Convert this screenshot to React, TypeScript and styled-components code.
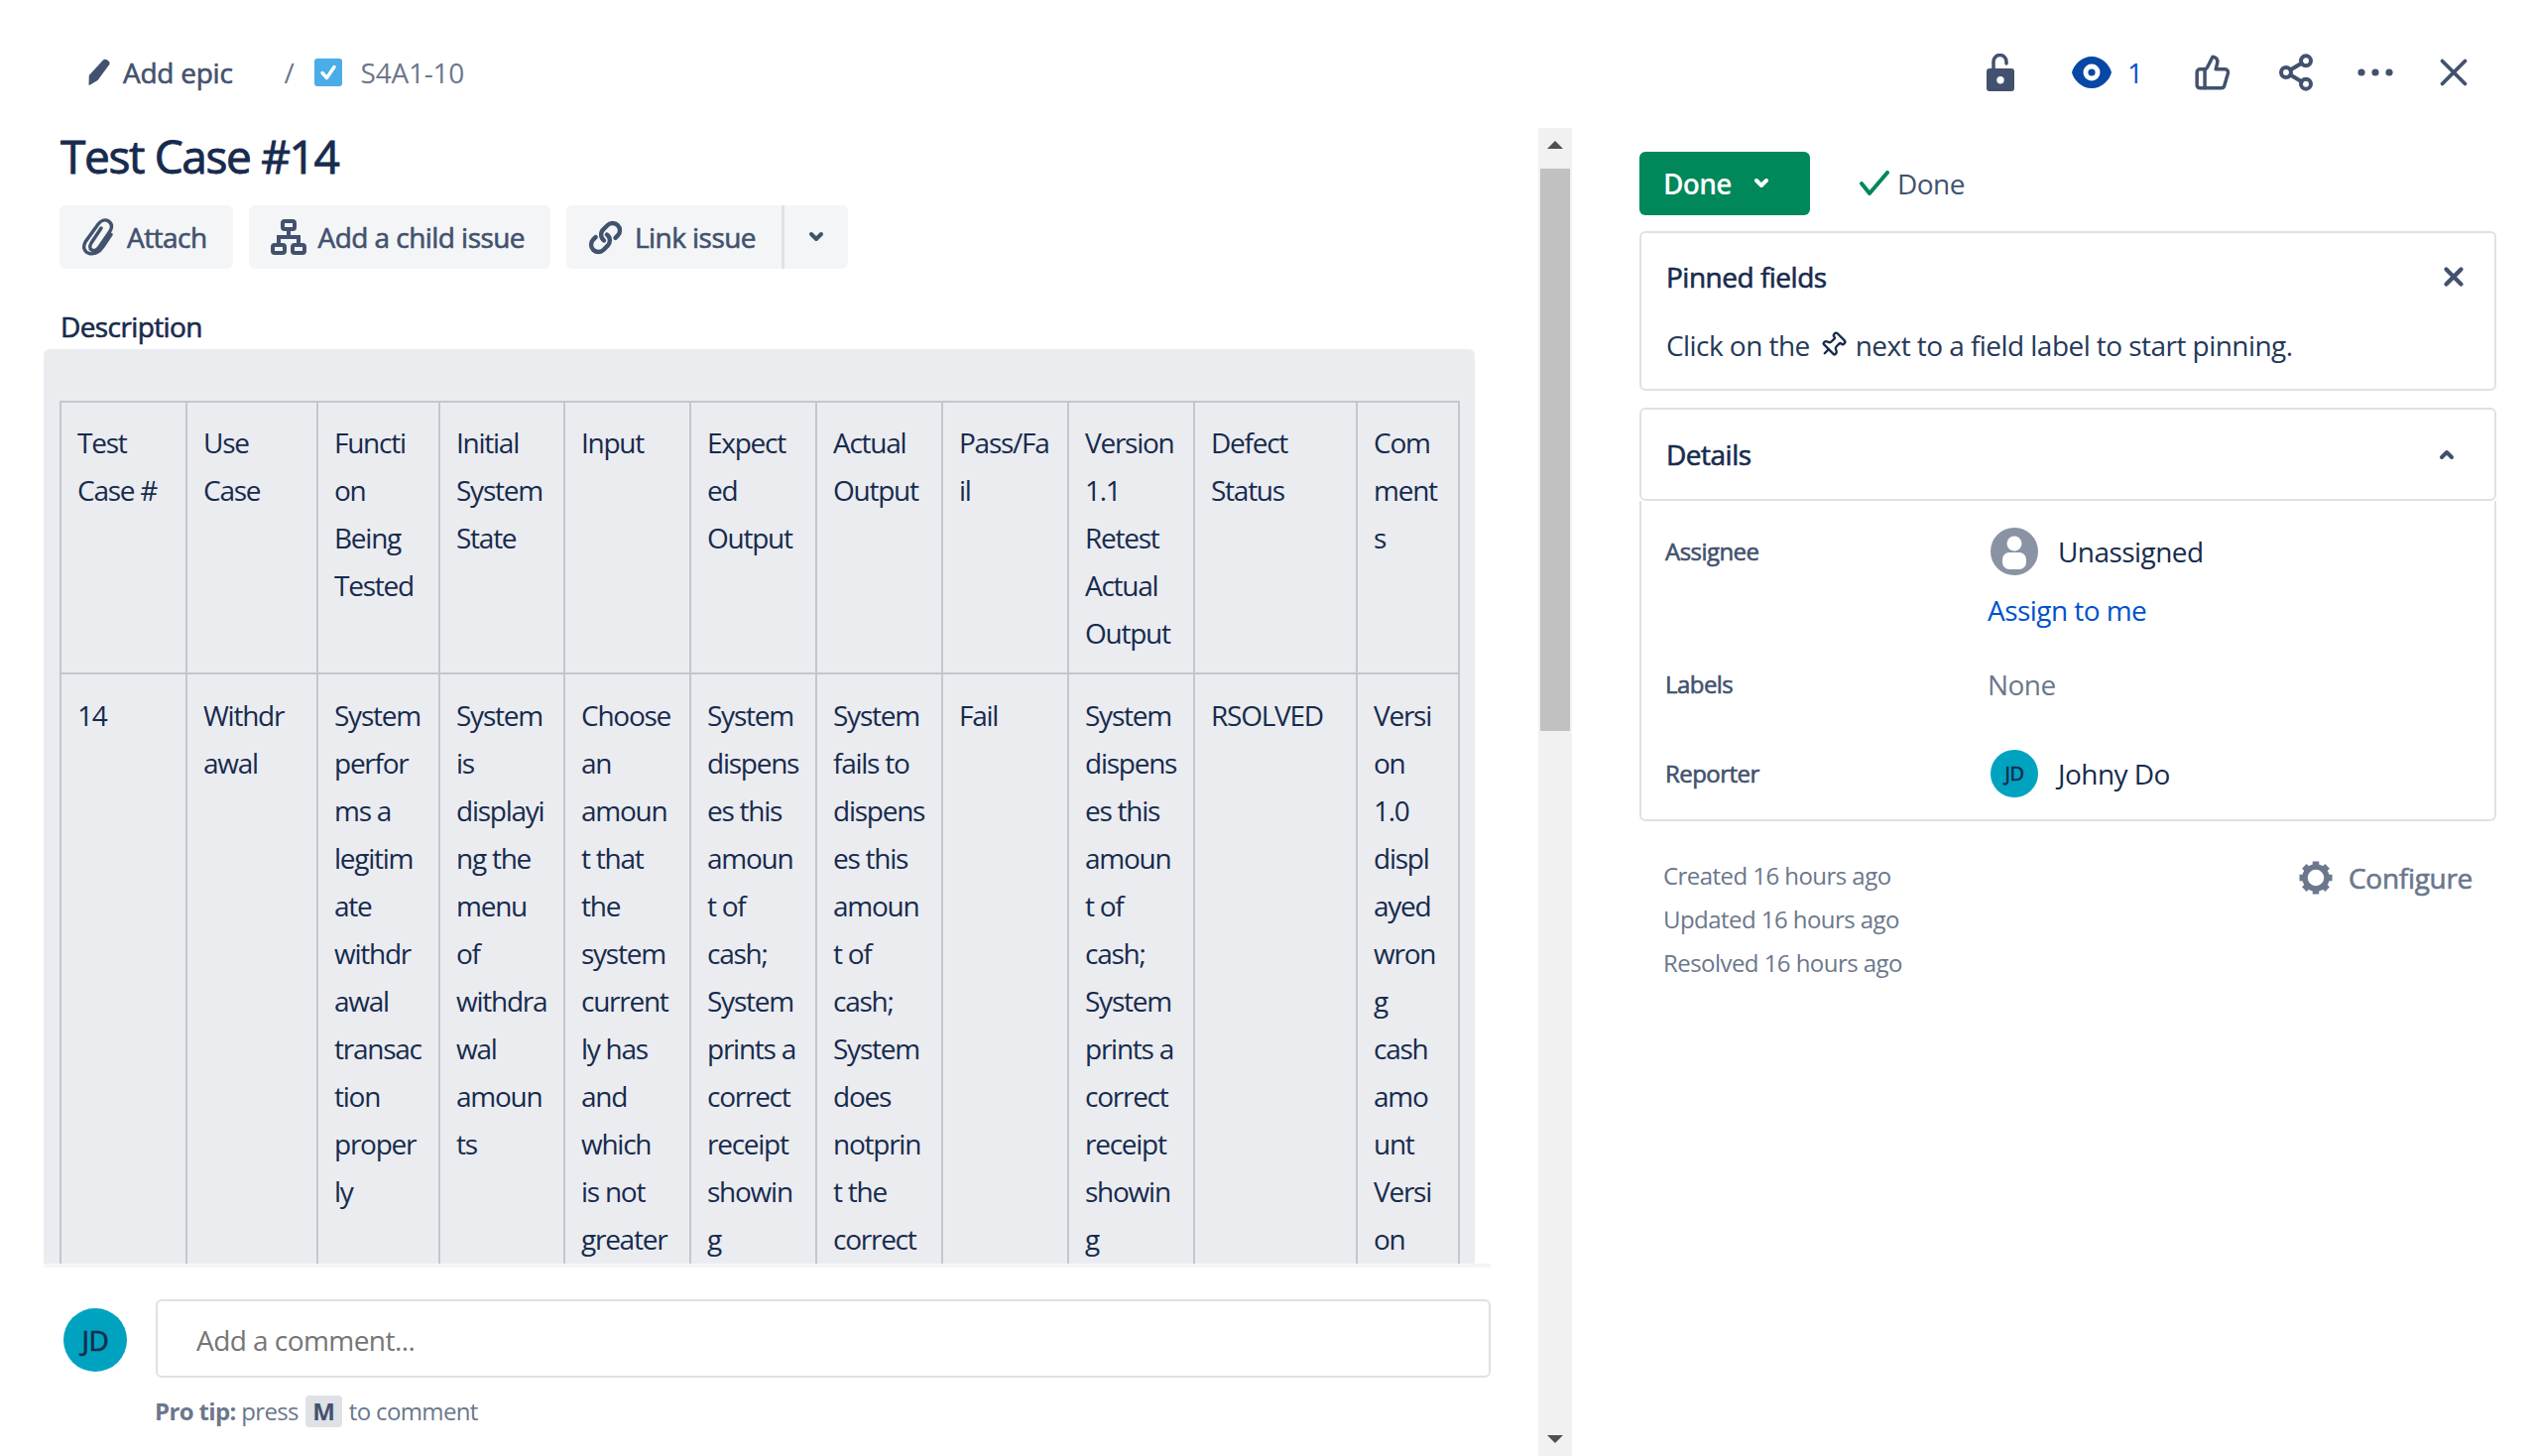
import React from "react";
import styled, { createGlobalStyle, css } from "styled-components";
import { Link as LinkIcon, Share2, ThumbsUp, X, Pin } from "lucide-react";

const GlobalStyle = createGlobalStyle`
  html, body {
    margin: 0;
    padding: 0;
    background: #fff;
  }
  body {
    font-family: "Open Sans", "Noto Sans", "Liberation Sans", sans-serif;
    font-size: 28px;
    line-height: 48px;
    letter-spacing: -0.55px;
    color: #172b4d;
  }
`;

// no medium cut of the font is installed, this thickens the regular one
const medium = css`
  -webkit-text-stroke: 0.6px currentColor;
`;

const Page = styled.div`
  width: 2556px;
  height: 1468px;
  display: flex;
  flex-direction: column;
  overflow: hidden;
`;

const TopBar = styled.header`
  height: 112px;
  padding: 17px 0 0 88px;
  display: flex;
  align-items: center;
  justify-content: space-between;
  flex-shrink: 0;
`;

const Breadcrumbs = styled.nav`
  display: flex;
  align-items: center;
  color: #42526e;
  letter-spacing: -0.25px;
`;

const Crumb = styled.span<{ $muted?: boolean }>`
  color: ${({ $muted }) => ($muted ? "#6b778c" : "#42526e")};
  ${({ $muted }) => !$muted && medium}
`;

const Slash = styled.span`
  color: #6b778c;
  margin: 0 20px 0 52px;
`;

const TopActions = styled.div`
  display: flex;
  align-items: center;
  padding-right: 66px;
`;

const TopAction = styled.span<{ $width: number; $blue?: boolean }>`
  width: ${({ $width }) => $width}px;
  display: flex;
  align-items: center;
  gap: 16px;
  color: ${({ $blue }) => ($blue ? "#0052cc" : "#42526e")};
`;

const Body = styled.div`
  flex: 1;
  min-height: 0;
  display: flex;
`;

const LeftPane = styled.div`
  width: 1585px;
  box-sizing: border-box;
  padding-left: 44px;
  display: flex;
  flex-shrink: 0;
`;

const IssueColumn = styled.main`
  width: 1459px;
  display: flex;
  flex-direction: column;
  min-height: 0;
`;

const Title = styled.h1`
  margin: 0 0 0 17px;
  font-size: 46px;
  line-height: 56px;
  font-weight: 400;
  letter-spacing: -1.35px;
  -webkit-text-stroke: 0.9px currentColor;
  color: #172b4d;
`;

const ButtonRow = styled.div`
  margin: 22px 0 0 16px;
  display: flex;
  gap: 16px;
`;

const ActionButton = styled.button`
  height: 64px;
  padding: 0 26px 0 22px;
  border: 0;
  border-radius: 6px;
  background: #f4f5f7;
  color: #42526e;
  font: inherit;
  letter-spacing: inherit;
  ${medium}
  display: flex;
  align-items: center;
  gap: 12px;
`;

const SplitButton = styled.div`
  display: flex;
  border-radius: 6px;
  overflow: hidden;
  background: #f4f5f7;
`;

const SplitCaret = styled.span`
  width: 64px;
  border-left: 3px solid #dfe1e6;
  display: flex;
  align-items: center;
  justify-content: center;
`;

const SectionLabel = styled.h2`
  margin: 38px 0 3px 17px;
  font-size: 28px;
  line-height: 40px;
  font-weight: 400;
  ${medium}
  letter-spacing: -0.6px;
  color: #172b4d;
`;

const DescriptionPanel = styled.div`
  flex: 1;
  min-height: 0;
  width: 1443px;
  padding: 52px 0 0 16px;
  box-sizing: border-box;
  background: #ebecf0;
  border-radius: 6px 6px 0 0;
  overflow: hidden;
`;

const Table = styled.table`
  width: 1412px;
  table-layout: fixed;
  border-collapse: collapse;
  letter-spacing: -1.25px;
`;

const Col = styled.col<{ $width: number }>`
  width: ${({ $width }) => $width}px;
`;

const Cell = styled.td`
  border: 2px solid #c1c7d0;
  padding: 16px 16px 16px;
  vertical-align: top;
  white-space: nowrap;
  overflow: hidden;
  tr:last-child & {
    padding-top: 17px;
  }
`;

const CellLine = styled.span`
  display: block;
`;

const CommentFooter = styled.footer`
  height: 194px;
  flex-shrink: 0;
  box-sizing: border-box;
  border-top: 4px solid #f4f5f7;
  padding-top: 32px;
  display: flex;
  align-items: flex-start;
`;

const Avatar = styled.span<{ $size: number; $font: number }>`
  width: ${({ $size }) => $size}px;
  height: ${({ $size }) => $size}px;
  border-radius: 50%;
  background: #00a3bf;
  color: #172b4d;
  font-size: ${({ $font }) => $font}px;
  ${medium}
  line-height: ${({ $size }) => $size}px;
  letter-spacing: -0.5px;
  text-align: center;
  flex-shrink: 0;
`;

const FooterAvatar = styled.div`
  margin: 9px 29px 0 20px;
  display: flex;
`;

const CommentColumn = styled.div`
  flex: 1;
`;

const CommentBox = styled.div`
  height: 79px;
  box-sizing: border-box;
  border: 2px solid #dfe1e6;
  border-radius: 6px;
  padding-left: 39px;
  color: #757575;
  line-height: 78px;
`;

const ProTip = styled.p`
  margin: 14px 0 0 -1px;
  font-size: 24px;
  line-height: 40px;
  letter-spacing: -0.65px;
  color: #6b778c;
  display: flex;
  align-items: center;
  gap: 7px;
`;

const ProTipLead = styled.strong`
  font-weight: 700;
`;

const KeyCap = styled.kbd`
  width: 37px;
  height: 32px;
  border-radius: 4px;
  background: #dfe1e6;
  color: #42526e;
  font: inherit;
  font-weight: 700;
  line-height: 32px;
  text-align: center;
`;

const ScrollBar = styled.div`
  width: 34px;
  margin-left: 48px;
  background: #f1f1f1;
  display: flex;
  flex-direction: column;
  align-items: center;
  flex-shrink: 0;
`;

const ScrollArrow = styled.span<{ $down?: boolean }>`
  height: 34px;
  flex-shrink: 0;
  display: flex;
  align-items: center;
  justify-content: center;
  &::before {
    content: "";
    border-left: 8px solid transparent;
    border-right: 8px solid transparent;
    ${({ $down }) =>
      $down ? "border-top: 8px solid #505050;" : "border-bottom: 8px solid #505050;"}
  }
`;

const ScrollThumb = styled.span`
  width: 30px;
  height: 567px;
  margin-top: 7px;
  background: #c1c1c1;
`;

const ScrollGap = styled.span`
  flex: 1;
`;

const RightPane = styled.aside`
  flex: 1;
  padding: 24px 39px 0 68px;
  min-width: 0;
`;

const StatusRow = styled.div`
  display: flex;
  align-items: center;
  height: 64px;
`;

const StatusButton = styled.button`
  width: 172px;
  height: 64px;
  padding: 0 0 0 24px;
  border: 0;
  border-radius: 6px;
  background: #00875a;
  color: #fff;
  font: inherit;
  letter-spacing: -0.7px;
  font-weight: 600;
  display: flex;
  align-items: center;
  gap: 22px;
`;

const Resolution = styled.span`
  margin-left: 50px;
  color: #42526e;
  display: flex;
  align-items: center;
  gap: 8px;
`;

const Card = styled.section`
  border: 2px solid #dfe1e6;
  border-radius: 6px;
`;

const PinnedCard = styled(Card)`
  margin-top: 16px;
  height: 161px;
  box-sizing: border-box;
  padding: 20px 26px 0 25px;
`;

const CardHeading = styled.div`
  display: flex;
  align-items: center;
  justify-content: space-between;
  ${medium}
  letter-spacing: -0.5px;
  color: #172b4d;
`;

const PinnedText = styled.p`
  margin: 21px 0 0;
  display: flex;
  align-items: center;
  gap: 9px;
  color: #253858;
`;

const DetailsHeader = styled(Card)`
  margin-top: 17px;
  height: 94px;
  box-sizing: border-box;
  padding: 0 40px 0 25px;
  display: flex;
  align-items: center;
  justify-content: space-between;
  ${medium}
  letter-spacing: -0.5px;
`;

const DetailsBody = styled.section`
  height: 323px;
  box-sizing: border-box;
  border: 2px solid #dfe1e6;
  border-top: 0;
  border-radius: 0 0 6px 6px;
  padding: 27px 0 0 24px;
`;

const DetailRow = styled.div<{ $height: number }>`
  height: ${({ $height }) => $height}px;
  display: grid;
  grid-template-columns: 325px 1fr;
`;

const DetailLabel = styled.span`
  font-size: 24px;
  ${medium}
  letter-spacing: -0.55px;
  color: #42526e;
`;

const DetailValue = styled.div`
  display: flex;
  flex-direction: column;
`;

const UserLine = styled.span`
  display: flex;
  align-items: center;
  gap: 20px;
  padding-left: 3px;
`;

const AssignLink = styled.a`
  margin-top: 11px;
  color: #0052cc;
`;

const NoneValue = styled.span`
  color: #6b778c;
`;

const MetaRow = styled.div`
  display: flex;
  justify-content: space-between;
  padding: 33px 24px 0 24px;
`;

const Timestamps = styled.div`
  font-size: 24px;
  line-height: 44px;
  letter-spacing: -0.55px;
  color: #6b778c;
`;

const ConfigureLink = styled.span`
  display: flex;
  align-items: center;
  align-self: flex-start;
  gap: 15px;
  ${medium}
  letter-spacing: -0.3px;
  color: #6b778c;
`;

const headerRow: string[][] = [
  ["Test", "Case #"],
  ["Use", "Case"],
  ["Functi", "on", "Being", "Tested"],
  ["Initial", "System", "State"],
  ["Input"],
  ["Expect", "ed", "Output"],
  ["Actual", "Output"],
  ["Pass/Fa", "il"],
  ["Version", "1.1", "Retest", "Actual", "Output"],
  ["Defect", "Status"],
  ["Com", "ment", "s"],
];

const caseRow: string[][] = [
  ["14"],
  ["Withdr", "awal"],
  ["System", "perfor", "ms a", "legitim", "ate", "withdr", "awal", "transac", "tion", "proper", "ly"],
  ["System", "is", "displayi", "ng the", "menu", "of", "withdra", "wal", "amoun", "ts"],
  ["Choose", "an", "amoun", "t that", "the", "system", "current", "ly has", "and", "which", "is not", "greater"],
  ["System", "dispens", "es this", "amoun", "t of", "cash;", "System", "prints a", "correct", "receipt", "showin", "g"],
  ["System", "fails to", "dispens", "es this", "amoun", "t of", "cash;", "System", "does", "notprin", "t the", "correct"],
  ["Fail"],
  ["System", "dispens", "es this", "amoun", "t of", "cash;", "System", "prints a", "correct", "receipt", "showin", "g"],
  ["RSOLVED"],
  ["Versi", "on", "1.0", "displ", "ayed", "wron", "g", "cash", "amo", "unt", "Versi", "on"],
];

const columnWidths = [127, 132, 123, 126, 127, 127, 127, 127, 127, 164, 103];

const TableRow = ({ cells }: { cells: string[][] }) => (
  <tr>
    {cells.map((lines, i) => (
      <Cell key={i}>
        {lines.map((line, j) => (
          <CellLine key={j}>{line}</CellLine>
        ))}
      </Cell>
    ))}
  </tr>
);

const PencilIcon = () => (
  <svg width="24" height="28" viewBox="0 0 24 28" style={{ marginRight: 12 }}>
    <path d="M16 1.5c1-1 2.6-1 3.8-.2l1.6 1.2c1.3 1 1.5 2.6.7 3.8L10.5 22 2 27l-.5-.4L1.8 17z" fill="#42526e" />
  </svg>
);

const StoryCheckIcon = () => (
  <svg width="28" height="28" viewBox="0 0 28 28" style={{ marginRight: 19 }}>
    <rect width="28" height="28" rx="3" fill="#4bade8" />
    <path d="M8 14.5l4.5 5L20 8.5" fill="none" stroke="#fff" strokeWidth="3.4" strokeLinecap="round" strokeLinejoin="round" />
  </svg>
);

const LockIcon = () => (
  <svg width="28" height="38" viewBox="0 0 28 38">
    <path d="M7 16V8a6.5 6.5 0 0 1 13 0v2" fill="none" stroke="#42526e" strokeWidth="3.5" strokeLinecap="round" />
    <path fillRule="evenodd" d="M3 15h22a3 3 0 0 1 3 3v17a3 3 0 0 1-3 3H3a3 3 0 0 1-3-3V18a3 3 0 0 1 3-3zm11 8a3.7 3.7 0 1 0 0 7.4 3.7 3.7 0 0 0 0-7.4z" fill="#42526e" />
  </svg>
);

const EyeIcon = () => (
  <svg width="40" height="32" viewBox="0 0 40 32">
    <path d="M20 0c10 0 18 8 20 16-2 8-10 16-20 16S2 24 0 16C2 8 10 0 20 0z" fill="#0747a6" />
    <circle cx="20" cy="16" r="8.5" fill="#fff" />
    <circle cx="20" cy="16" r="3.6" fill="#0747a6" />
  </svg>
);

const DotsIcon = () => (
  <svg width="36" height="10" viewBox="0 0 36 10">
    <circle cx="4" cy="5" r="3.6" fill="#42526e" />
    <circle cx="18" cy="5" r="3.6" fill="#42526e" />
    <circle cx="32" cy="5" r="3.6" fill="#42526e" />
  </svg>
);

const PaperclipIcon = () => (
  <svg width="34" height="38" viewBox="0 0 34 38" fill="none" stroke="#42526e" strokeWidth="3.4" strokeLinecap="round">
    <path d="M14 35c-4 2-9.500 .5-11-4-1-3 0-5 1-7L17 6c2.500-3.500 6.500-5.500 10.500-3 3.500 2.500 3.500 6.500 1.500 10L18 29c-2 3-5 4.500-7.500 3-2.500-1.500-2-4.500-.5-7l10-15" />
    <path d="M14 35c4-1 6-3.500 8-6.500l8-12" />
  </svg>
);

const HierarchyIcon = () => (
  <svg width="36" height="36" viewBox="0 0 36 36" fill="none" stroke="#42526e" strokeWidth="4">
    <rect x="12" y="2" width="12" height="8" rx="2" />
    <rect x="2" y="26" width="12" height="8" rx="2" />
    <rect x="22" y="26" width="12" height="8" rx="2" />
    <path d="M18 10v8M8 26v-8h20v8" />
  </svg>
);

const Chevron = ({ color = "#42526e", up = false }: { color?: string; up?: boolean }) => (
  <svg width="16" height="12" viewBox="0 0 16 12" fill="none" stroke={color} strokeWidth="4" strokeLinecap="round" strokeLinejoin="round">
    <path d={up ? "M3 9l5-5 5 5" : "M3 3l5 5 5-5"} />
  </svg>
);

const CheckMark = () => (
  <svg width="30" height="26" viewBox="0 0 30 26" fill="none" stroke="#00875a" strokeWidth="4" strokeLinecap="round" strokeLinejoin="round">
    <path d="M2 13l8 10L28 2" />
  </svg>
);

const PersonAvatar = () => (
  <svg width="48" height="48" viewBox="0 0 48 48">
    <circle cx="24" cy="24" r="24" fill="#8993a4" />
    <circle cx="24" cy="16" r="7.500" fill="#fff" />
    <rect x="12" y="25" width="24" height="17" rx="7" fill="#fff" />
  </svg>
);

const GearIcon = () => (
  <svg width="36" height="36" viewBox="0 0 36 36" fill="none" stroke="#6b778c">
    <circle cx="18" cy="18" r="11" strokeWidth="5.500" />
    {[0, 45, 90, 135, 180, 225, 270, 315].map((angle) => (
      <path key={angle} d="M18 1.500v6" strokeWidth="6.500" transform={`rotate(${angle} 18 18)`} />
    ))}
  </svg>
);

export default function App() {
  return (
    <Page>
      <GlobalStyle />
      <TopBar>
        <Breadcrumbs>
          <PencilIcon />
          <Crumb>Add epic</Crumb>
          <Slash>/</Slash>
          <StoryCheckIcon />
          <Crumb $muted>S4A1-10</Crumb>
        </Breadcrumbs>
        <TopActions>
          <TopAction $width={86}>
            <LockIcon />
          </TopAction>
          <TopAction $width={123} $blue>
            <EyeIcon />1
          </TopAction>
          <TopAction $width={83}>
            <ThumbsUp size={38} strokeWidth={2.200} color="#42526e" />
          </TopAction>
          <TopAction $width={82}>
            <Share2 size={40} strokeWidth={2.400} color="#42526e" />
          </TopAction>
          <TopAction $width={82}>
            <DotsIcon />
          </TopAction>
          <TopAction $width={31}>
            <X size={46} strokeWidth={2} color="#42526e" style={{ margin: "0 -8px" }} />
          </TopAction>
        </TopActions>
      </TopBar>
      <Body>
        <LeftPane>
          <IssueColumn>
            <Title>Test Case #14</Title>
            <ButtonRow>
              <ActionButton>
                <PaperclipIcon />
                Attach
              </ActionButton>
              <ActionButton>
                <HierarchyIcon />
                Add a child issue
              </ActionButton>
              <SplitButton>
                <ActionButton>
                  <LinkIcon size={35} strokeWidth={3} color="#42526e" style={{ transform: "scaleX(-1) rotate(90deg)" }} />
                  Link issue
                </ActionButton>
                <SplitCaret>
                  <Chevron />
                </SplitCaret>
              </SplitButton>
            </ButtonRow>
            <SectionLabel>Description</SectionLabel>
            <DescriptionPanel>
              <Table>
                <colgroup>
                  {columnWidths.map((width, i) => (
                    <Col key={i} $width={width} />
                  ))}
                </colgroup>
                <tbody>
                  <TableRow cells={headerRow} />
                  <TableRow cells={caseRow} />
                </tbody>
              </Table>
            </DescriptionPanel>
            <CommentFooter>
              <FooterAvatar>
                <Avatar $size={64} $font={28}>JD</Avatar>
              </FooterAvatar>
              <CommentColumn>
                <CommentBox>Add a comment...</CommentBox>
                <ProTip>
                  <span>
                    <ProTipLead>Pro tip:</ProTipLead> press
                  </span>
                  <KeyCap>M</KeyCap>
                  <span>to comment</span>
                </ProTip>
              </CommentColumn>
            </CommentFooter>
          </IssueColumn>
          <ScrollBar>
            <ScrollArrow />
            <ScrollThumb />
            <ScrollGap />
            <ScrollArrow $down />
          </ScrollBar>
        </LeftPane>
        <RightPane>
          <StatusRow>
            <StatusButton>
              Done
              <Chevron color="#fff" />
            </StatusButton>
            <Resolution>
              <CheckMark />
              Done
            </Resolution>
          </StatusRow>
          <PinnedCard>
            <CardHeading>
              Pinned fields
              <X size={30} strokeWidth={3.400} color="#42526e" />
            </CardHeading>
            <PinnedText>
              Click on the
              <Pin size={28} strokeWidth={2} color="#172b4d" style={{ transform: "rotate(45deg)" }} />
              next to a field label to start pinning.
            </PinnedText>
          </PinnedCard>
          <DetailsHeader>
            Details
            <Chevron up />
          </DetailsHeader>
          <DetailsBody>
            <DetailRow $height={134}>
              <DetailLabel>Assignee</DetailLabel>
              <DetailValue>
                <UserLine>
                  <PersonAvatar />
                  Unassigned
                </UserLine>
                <AssignLink>Assign to me</AssignLink>
              </DetailValue>
            </DetailRow>
            <DetailRow $height={90}>
              <DetailLabel>Labels</DetailLabel>
              <DetailValue>
                <NoneValue>None</NoneValue>
              </DetailValue>
            </DetailRow>
            <DetailRow $height={60}>
              <DetailLabel>Reporter</DetailLabel>
              <DetailValue>
                <UserLine>
                  <Avatar $size={48} $font={20}>JD</Avatar>
                  Johny Do
                </UserLine>
              </DetailValue>
            </DetailRow>
          </DetailsBody>
          <MetaRow>
            <Timestamps>
              <div>Created 16 hours ago</div>
              <div>Updated 16 hours ago</div>
              <div>Resolved 16 hours ago</div>
            </Timestamps>
            <ConfigureLink>
              <GearIcon />
              Configure
            </ConfigureLink>
          </MetaRow>
        </RightPane>
      </Body>
    </Page>
  );
}
